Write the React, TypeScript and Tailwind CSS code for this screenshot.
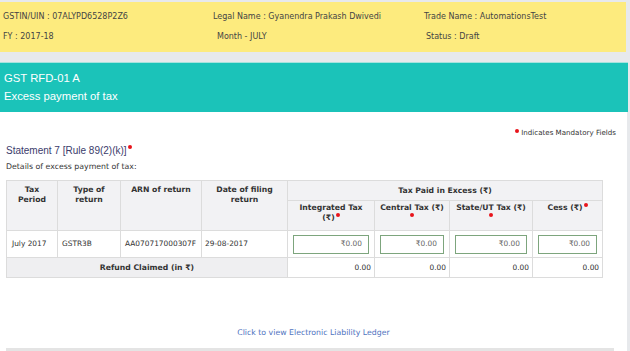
import React from "react";

const Dot = ({ className = "" }: { className?: string }) => (
  <span className={"inline-block w-[4px] h-[4px] rounded-full bg-[#e8141b] " + className} />
);

export default function App() {
  const verd = { fontFamily: '"DejaVu Sans", Verdana, sans-serif' };
  const arial = { fontFamily: '"Liberation Sans", Arial, sans-serif' };
  const th = "border border-[#dcdcdc] bg-[#f2f2f4] font-bold text-[#333] text-center text-[7.7px]";
  const td = "border border-[#dcdcdc] text-[#333]";
  return (
    <div className="w-[630px] h-[351px] overflow-hidden bg-[#e7e9ec] pt-[2px]" style={verd}>
      {/* top info bar */}
      <div className="w-[626px] h-[50px] bg-[#fdeb7e] grid grid-cols-[210px_211px_205px] grid-rows-2 py-[5px] text-[8px] text-[#444]">
        <div className="pl-[3px] flex items-center">GSTIN/UIN : 07ALYPD6528P2Z6</div>
        <div className="pl-[3px] flex items-center">Legal Name : Gyanendra Prakash Dwivedi</div>
        <div className="pl-[3px] flex items-center">Trade Name : AutomationsTest</div>
        <div className="pl-[3px] flex items-center">FY : 2017-18</div>
        <div className="pl-[7px] flex items-center">Month - JULY</div>
        <div className="pl-[5px] flex items-center">Status : Draft</div>
      </div>

      {/* teal heading */}
      <div className="mt-[10px] w-[628px] h-[50px] bg-[#1bc3b9] border-t border-[#a6e3de] text-white text-[11.3px] pl-[4px] flex flex-col justify-center gap-[7px] leading-none" style={arial}>
        <div>GST RFD-01 A</div>
        <div>Excess payment of tax</div>
      </div>

      {/* white panel */}
      <div className="w-[627px] h-[240px] bg-white relative">
        <div className="flex justify-end items-start pr-[11px] pt-[16px] text-[7.1px] text-[#333]">
          <Dot className="mr-[2px] mt-[1px]" />
          <span>Indicates Mandatory Fields</span>
        </div>
        <div className="pl-[6px] mt-[7px] text-[10px] text-[#3b3b6b] leading-none flex items-start" style={arial}>
          <span>Statement 7 [Rule 89(2)(k)]</span>
          <Dot className="ml-[1px] -mt-[1px]" />
        </div>
        <div className="pl-[6px] mt-[7px] text-[7.8px] text-[#333] leading-none">Details of excess payment of tax:</div>

        <table className="ml-[6px] mt-[10px] table-fixed border-collapse text-[7.4px] leading-[10px] w-[596px]">
          <colgroup>
            <col className="w-[51px]" />
            <col className="w-[63px]" />
            <col className="w-[81px]" />
            <col className="w-[86px]" />
            <col className="w-[87px]" />
            <col className="w-[75px]" />
            <col className="w-[83px]" />
            <col className="w-[70px]" />
          </colgroup>
          <thead>
            <tr className="h-[20px]">
              <th rowSpan={2} className={th + " align-top pt-[4px]"}>Tax<br />Period</th>
              <th rowSpan={2} className={th + " align-top pt-[4px]"}>Type of<br />return</th>
              <th rowSpan={2} className={th + " align-top pt-[4px]"}>ARN of return</th>
              <th rowSpan={2} className={th + " align-top pt-[4px]"}>Date of filing<br />return</th>
              <th colSpan={4} className={th + " align-middle"}>Tax Paid in Excess (₹)</th>
            </tr>
            <tr className="h-[30px]">
              <th className={th + " align-top pt-[2px]"}>
                Integrated Tax<br />(₹)<Dot className="ml-[1px] align-top" />
              </th>
              <th className={th + " align-top pt-[2px]"}>
                Central Tax (₹)<br /><Dot className="align-top" />
              </th>
              <th className={th + " align-top pt-[2px]"}>
                State/UT Tax (₹)<br /><Dot className="align-top" />
              </th>
              <th className={th + " align-top pt-[2px]"}>
                Cess (₹)<Dot className="ml-[1px] align-top" />
              </th>
            </tr>
          </thead>
          <tbody>
            <tr className="h-[27px]">
              <td className={td + " pl-[5px]"}>July 2017</td>
              <td className={td + " pl-[4px]"}>GSTR3B</td>
              <td className={td + " pl-[4px]"}>AA070717000307F</td>
              <td className={td + " pl-[3px]"}>29-08-2017</td>
              {["", "", "", ""].map((_, i) => (
                <td key={i} className={td + " px-[5px]"}>
                  <div className="h-[19px] border border-[#7da57d] flex items-center justify-end pr-[6px] text-[#666]">₹0.00</div>
                </td>
              ))}
            </tr>
            <tr className="h-[20px]">
              <td colSpan={4} className={td + " bg-[#efeff1] font-bold text-center text-[7.7px]"}>Refund Claimed (in ₹)</td>
              {["", "", "", ""].map((_, i) => (
                <td key={i} className={td + " text-right pr-[3px]"}>0.00</td>
              ))}
            </tr>
          </tbody>
        </table>

        <div className="mt-[49px] text-center text-[7.8px] text-[#4f73c0]">Click to view Electronic Liability Ledger</div>
        <div className="absolute left-[6px] top-[236px] w-[608px] h-[6px] bg-[#e4e4e4]" />
      </div>
    </div>
  );
}
